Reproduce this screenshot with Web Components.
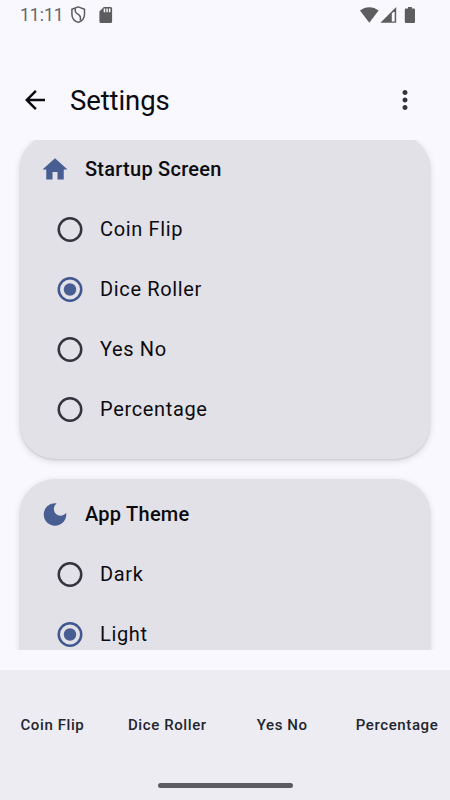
<!DOCTYPE html>
<html lang="en">
<head>
<meta charset="utf-8">
<title>Settings</title>
<style>
html,body{margin:0;height:100%;overflow:hidden}
body{font-family:Roboto,"Noto Sans",sans-serif;background:#f9f8ff;color:#0b0b10}
</style>
</head>
<body>
<settings-app></settings-app>
<script>
const define = (name, html) => {
  const t = document.createElement('template');
  t.innerHTML = html;
  customElements.define(name, class extends HTMLElement {
    constructor() {
      super();
      this.attachShadow({mode: 'open'}).appendChild(t.content.cloneNode(true));
    }
  });
};

define('status-bar', `
<style>
:host{display:flex;height:30px;box-sizing:border-box;padding:0 34px 0 20px;align-items:center;color:#66666a}
.time{font-size:17.5px;font-weight:400;line-height:30px;letter-spacing:0;width:50px;white-space:nowrap}
svg{display:block;fill:#5d5d60}
.right{margin-left:auto;display:flex}
</style>
<span class="time">11:11</span>
<svg width="36" height="30" viewBox="70 0 36 30" style="flex:none">
<path d="M78.200 6.900l6.300 2.300v5c0 3.800-2.500 6.800-6.300 8.200-3.800-1.400-6.300-4.400-6.300-8.200v-5z" fill="none" stroke="#5d5d60" stroke-width="1.500" stroke-linejoin="round"/>
<path d="M75.400 8.300c-.9 3.500.2 4.700 2.500 5.900s3.300 2.500 2.300 6.300" fill="none" stroke="#5d5d60" stroke-width="1.500"/>
</svg>
<svg width="20" height="30" viewBox="98 0 20 30" style="flex:none;margin-left:-8px">
<path fill-rule="evenodd" d="M103.800 7h6.800a1.500 1.500 0 0 1 1.500 1.500v13a1.500 1.500 0 0 1-1.500 1.500h-9.700a1.500 1.500 0 0 1-1.500-1.500v-10zM103.700 8.500v3.800h1.500v-3.800zM106.300 8.500v3.800h1.500v-3.800zM108.900 8.500v3.800h1.500v-3.800z"/>
</svg>
<svg class="right" width="58" height="30" viewBox="358 0 58 30" style="flex:none">
<path d="M369.300 22.800l-9.300-12.200c5.300-4.600 13.300-4.600 18.600 0z"/>
<path fill-rule="evenodd" d="M396.200 7v15.800h-15.800zM391.800 13.500v8h2.900v-9.500h-1.400z"/>
<path d="M408 7h3.800v1.600h2a1.200 1.200 0 0 1 1.200 1.200v12a1.200 1.200 0 0 1-1.200 1.200h-7.800a1.200 1.200 0 0 1-1.200-1.200v-12a1.200 1.200 0 0 1 1.200-1.200h2z"/>
</svg>`);

define('top-bar', `
<style>
:host{display:flex;height:80px;box-sizing:border-box;margin-top:30px;padding:0 30px 0 20px;align-items:center}
h1{font-size:27.5px;font-weight:400;letter-spacing:-.1px;line-height:35px;margin:0 auto 0 20px}
svg{display:block;width:30px;height:30px}
</style>
<svg viewBox="0 0 24 24"><path fill="#0b0b10" d="M20 11H7.830l5.590-5.590L12 4l-8 8 8 8 1.410-1.410L7.830 13H20v-2z"/></svg>
<h1><slot></slot></h1>
<svg viewBox="0 0 24 24"><path fill="#34343f" d="M12 8c1.100 0 2-.9 2-2s-.9-2-2-2-2 .9-2 2 .9 2 2 2zm0 2c-1.100 0-2 .9-2 2s.9 2 2 2 2-.9 2-2-.9-2-2-2zm0 6c-1.100 0-2 .9-2 2s.9 2 2 2 2-.9 2-2-.9-2-2-2z"/></svg>`);

define('settings-card', `
<style>
:host{display:block;flex:none;box-sizing:border-box;padding:5px 0 20px;border-radius:35px;background:#e2e1e7;box-shadow:0 1px 2px rgba(0,0,0,.11),0 2px 7px rgba(0,0,0,.14)}
header{display:flex;align-items:center;height:60px;padding-left:20px;gap:15px;font-size:20px;font-weight:500;letter-spacing:.25px}
</style>
<header><slot name="icon"></slot><slot name="title"></slot></header>
<slot></slot>`);

define('radio-option', `
<style>
:host{display:flex;align-items:center;height:60px;padding-left:37px;font-size:20px;letter-spacing:.65px}
svg{display:block;flex:none;margin-right:17px}
.dot{display:none}
circle{fill:none;stroke:#34343f;stroke-width:2.500}
:host([checked]) circle{stroke:#40578f}
:host([checked]) .dot{display:block;fill:#485d92;stroke:none}
</style>
<svg width="26" height="26"><circle cx="13" cy="13.500" r="11.250"/><circle class="dot" cx="13" cy="13.500" r="6.250"/></svg>
<slot></slot>`);

define('nav-item', `
<style>
:host{display:flex;flex:1 1 0;min-width:0;justify-content:center;font-size:15px;font-weight:500;line-height:20px;letter-spacing:.6px;white-space:nowrap;color:#23252f}
</style><slot></slot>`);

define('bottom-nav', `
<style>
:host{display:flex;flex-direction:column;height:130px;background:#edecf2;justify-content:space-between;align-items:center}
nav{display:flex;align-self:stretch;box-sizing:border-box;gap:10px;padding:45px .5px 0 0}
.handle{width:135px;height:5px;border-radius:2.500px;background:#5c5c60;margin-bottom:12.500px}
</style>
<nav><slot></slot></nav><div class="handle"></div>`);

define('settings-app', `
<style>
:host{display:flex;flex-direction:column;width:450px;height:800px;overflow:hidden}
main{display:flow-root;flex:none;height:510px;overflow:hidden;margin-bottom:20px}
.scroll{display:flex;flex-direction:column;gap:20px;margin-top:-6px;padding:0 20px}
.last{height:260px}
svg{display:block;width:30px;height:30px;fill:#485d92}
</style>
<status-bar></status-bar>
<top-bar>Settings</top-bar>
<main><div class="scroll">
<settings-card>
<svg slot="icon" viewBox="0 -.4 24 24"><path d="M10 20v-6h4v6h5v-8h3L12 3 2 12h3v8z"/></svg>
<span slot="title">Startup Screen</span>
<radio-option>Coin Flip</radio-option>
<radio-option checked>Dice Roller</radio-option>
<radio-option>Yes No</radio-option>
<radio-option>Percentage</radio-option>
</settings-card>
<settings-card class="last">
<svg slot="icon" viewBox="0 -.4 24 24"><path d="M12 3c-4.970 0-9 4.030-9 9s4.030 9 9 9 9-4.030 9-9c0-.46-.04-.92-.1-1.360-.98 1.370-2.580 2.260-4.400 2.260-2.980 0-5.400-2.420-5.400-5.400 0-1.810.89-3.420 2.260-4.400C12.920 3.040 12.460 3 12 3z"/></svg>
<span slot="title">App Theme</span>
<radio-option>Dark</radio-option>
<radio-option checked>Light</radio-option>
</settings-card>
</div></main>
<bottom-nav>
<nav-item>Coin Flip</nav-item><nav-item>Dice Roller</nav-item><nav-item>Yes No</nav-item><nav-item>Percentage</nav-item>
</bottom-nav>`);
</script>
</body>
</html>
